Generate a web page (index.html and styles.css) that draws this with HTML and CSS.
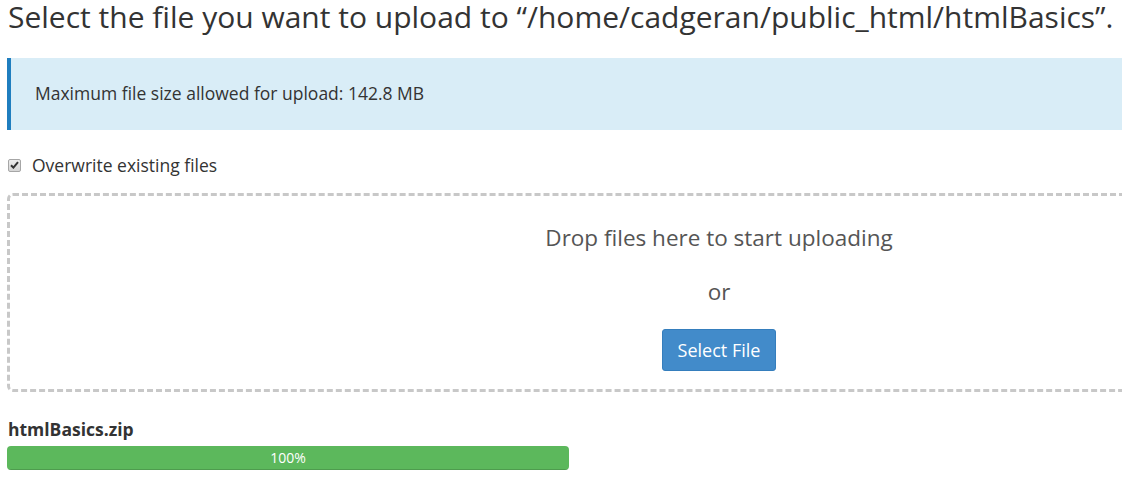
FILE: index.html
```html
<!DOCTYPE html>
<html lang="en">
<head>
<meta charset="utf-8">
<title>Upload</title>
<link rel="stylesheet" href="styles.css">
</head>
<body>
<div class="page">
  <h1 class="title">Select the file you want to upload to “/home/cadgeran/public_html/htmlBasics”.</h1>
  <div class="alert">Maximum file size allowed for upload: 142.8 MB</div>
  <label class="overwrite">
    <span class="check"><svg width="9" height="8" viewBox="0 0 9 8"><path d="M1 4.2 L3.4 6.6 L8 1.2" fill="none" stroke="#333" stroke-width="2"/></svg></span>
    <span>Overwrite existing files</span>
  </label>
  <div class="dropzone">
    <div class="drop-text">Drop files here to start uploading</div>
    <div class="or">or</div>
    <button class="btn">Select File</button>
  </div>
  <div class="file">
    <div class="file-name">htmlBasics.zip</div>
    <div class="progress"><div class="bar" style="width:100%">100%</div></div>
  </div>
</div>
</body>
</html>
```
FILE: styles.css
```css
html, body {
  margin: 0;
  padding: 0;
  overflow: hidden;
  background: #fff;
}
body {
  font-family: "Open Sans", "Liberation Sans", sans-serif;
  color: #333;
  font-size: 17.5px;
}
.page {
  width: 1424px;
  padding-left: 7px;
}
.title {
  margin: 0;
  font-size: 30px;
  font-weight: 400;
  line-height: 33px;
  padding-left: 1px;
  color: #333;
  white-space: nowrap;
}
.alert {
  margin-top: 25px;
  background: #d9edf7;
  border-left: 4px solid #1f7ebf;
  padding: 22px 24px 24px;
  line-height: 26px;
  color: #333;
}
.overwrite {
  display: flex;
  align-items: center;
  gap: 11px;
  margin-top: 23px;
  padding-left: 1px;
  line-height: 24px;
}
.check {
  width: 11px;
  height: 11px;
  border: 1px solid #a6a6a6;
  border-radius: 2px;
  background: linear-gradient(#ededed, #d6d6d6);
  display: flex;
  align-items: center;
  justify-content: center;
}
.dropzone {
  margin-top: 16px;
  border: 3px dashed #c8c8c8;
  border-radius: 6px;
  box-sizing: border-box;
  height: 199px;
  display: flex;
  flex-direction: column;
  align-items: center;
  padding-top: 26px;
}
.drop-text {
  font-size: 22.5px;
  line-height: 32px;
  color: #555;
}
.or {
  margin-top: 22px;
  font-size: 22.5px;
  line-height: 32px;
  color: #555;
}
.btn {
  margin-top: 21px;
  font-family: inherit;
  font-size: 18px;
  line-height: 24px;
  padding: 8px 15px;
  color: #fff;
  background: #428bca;
  border: 1px solid #357ebd;
  border-radius: 3px;
}
.file {
  margin-top: 25px;
  width: 562px;
}
.file-name {
  font-weight: 700;
  font-size: 17.5px;
  line-height: 24px;
  padding-left: 1px;
}
.progress {
  margin-top: 5px;
  height: 24px;
  border-radius: 4px;
  background: #f5f5f5;
  overflow: hidden;
}
.bar {
  height: 100%;
  background: #5cb85c;
  color: #fff;
  font-size: 14px;
  line-height: 24px;
  text-align: center;
  box-shadow: inset 0 -1px 0 rgba(0,0,0,0.15);
}
```
